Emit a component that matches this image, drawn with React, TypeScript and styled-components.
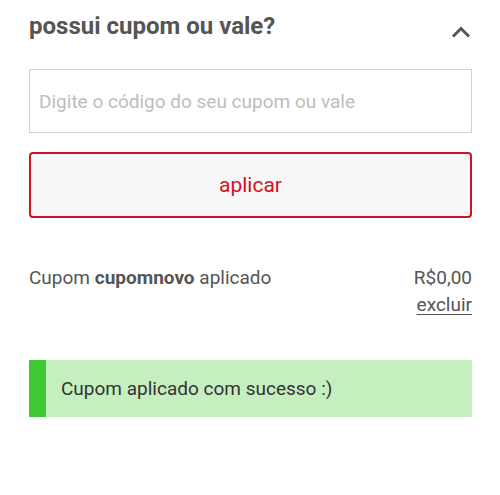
import styled, { createGlobalStyle } from 'styled-components'

const GlobalStyle = createGlobalStyle`
  body {
    margin: 0;
    background: #fff;
    font-family: Roboto, 'Liberation Sans', sans-serif;
  }
`

const Container = styled.section`
  padding: 12px 28px 0 29px;
  width: 443px;
`

const Header = styled.div`
  display: flex;
  justify-content: space-between;
  align-items: center;
  height: 28px;
`

const Title = styled.h2`
  margin: 0;
  font-size: 24px;
  line-height: 28px;
  font-weight: 700;
  color: #555;
`

const Chevron = styled.svg`
  width: 20px;
  height: 12px;
  margin: 12px 1px 0 0;
`

const CodeInput = styled.input`
  display: block;
  box-sizing: border-box;
  width: 100%;
  height: 64px;
  margin-top: 29px;
  padding: 0 9px;
  border: 1px solid #d0d0d0;
  border-radius: 0;
  font-family: Roboto, 'Liberation Sans', sans-serif;
  font-size: 19px;
  color: #444;
  outline: none;
  &::placeholder {
    color: #bdbdbd;
  }
`

const ApplyButton = styled.button`
  display: block;
  box-sizing: border-box;
  width: 100%;
  height: 66px;
  margin-top: 19px;
  border: 2px solid #d3121f;
  border-radius: 4px;
  background: #f7f7f7;
  color: #d3121f;
  font-family: Roboto, 'Liberation Sans', sans-serif;
  font-size: 21px;
`

const CouponRow = styled.div`
  display: flex;
  justify-content: space-between;
  align-items: flex-start;
  margin-top: 49px;
  font-size: 19px;
  line-height: 22px;
  color: #555;
  b {
    font-weight: 700;
  }
`

const CouponValue = styled.div`
  display: flex;
  flex-direction: column;
  align-items: flex-end;
  gap: 5px;
`

const RemoveLink = styled.a`
  color: #555;
  text-decoration: underline;
  text-underline-offset: 3px;
  cursor: pointer;
`

const Notice = styled.div<{ accent: string }>`
  display: flex;
  align-items: center;
  height: 57px;
  margin-top: 44px;
  padding-left: 15px;
  background: #c6efc0;
  border-left: 17px solid ${(props) => props.accent};
  font-size: 19px;
  color: #333;
`

export default function App(): JSX.Element {
  return (
    <>
      <GlobalStyle />
      <Container>
        <Header>
          <Title>possui cupom ou vale?</Title>
          <Chevron viewBox="0 0 20 12">
            <path
              d="M2 10.5 L10 2.5 L18 10.5"
              fill="none"
              stroke="#555"
              strokeWidth="3"
            />
          </Chevron>
        </Header>
        <CodeInput placeholder="Digite o código do seu cupom ou vale" />
        <ApplyButton>aplicar</ApplyButton>
        <CouponRow>
          <span>
            Cupom <b>cupomnovo</b> aplicado
          </span>
          <CouponValue>
            <span>R$0,00</span>
            <RemoveLink>excluir</RemoveLink>
          </CouponValue>
        </CouponRow>
        <Notice accent="#3ec832">Cupom aplicado com sucesso :)</Notice>
      </Container>
    </>
  )
}
